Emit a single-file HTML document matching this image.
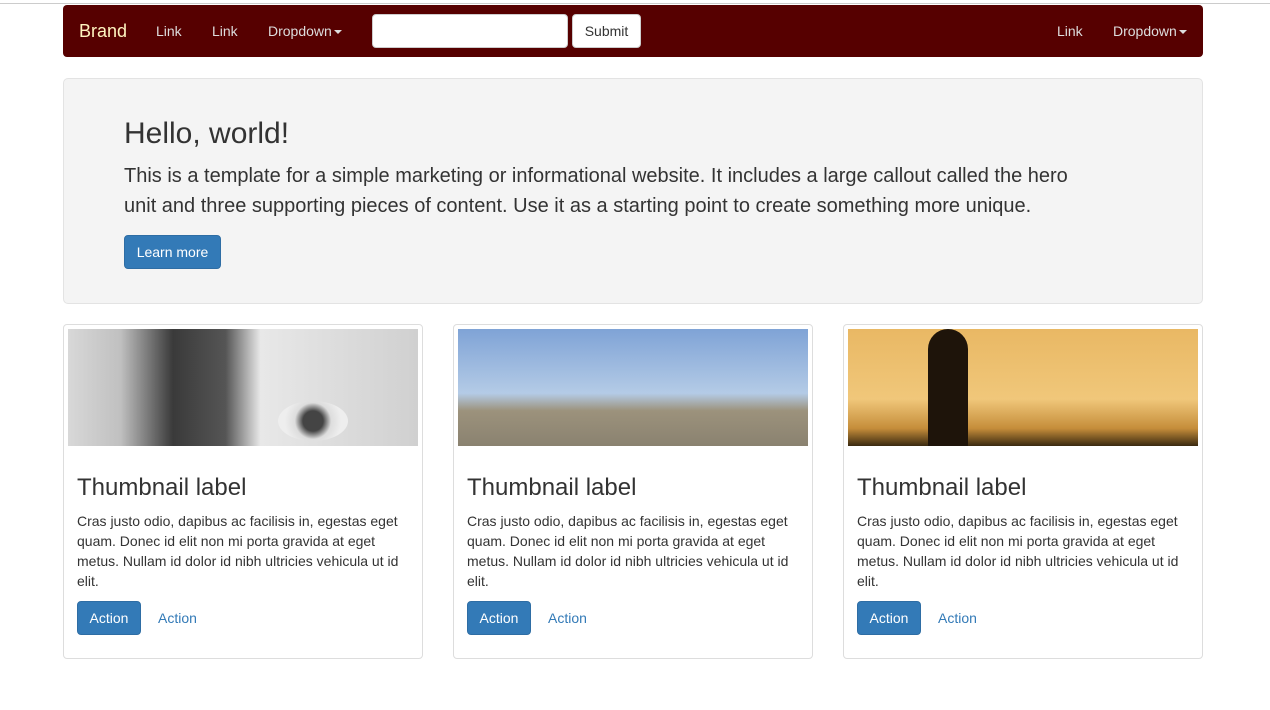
<!DOCTYPE html>
<html><head><style>
*{box-sizing:border-box;margin:0;padding:0}
body{width:1270px;height:710px;background:#fff;font-family:"Liberation Sans",Arial,sans-serif;color:#333;position:relative;overflow:hidden}
.abs{position:absolute}
.nav{left:63px;top:5px;width:1140px;height:52px;background:#560000;border-radius:4px}
.nav span{position:absolute;color:#ddd;font-size:14px;top:18px}
.caret{display:inline-block;border-top:4px solid #ddd;border-left:4px solid transparent;border-right:4px solid transparent;vertical-align:middle;margin-left:2px}
.jumbo{left:63px;top:78px;width:1140px;height:226px;background:#f4f4f4;border:1px solid #e3e3e3;border-radius:5px}
.btn{position:absolute;background:#337ab7;border:1px solid #2e6da4;color:#fff;border-radius:4px;font-size:14px;text-align:center}
.th{width:360px;height:335px;top:324px;border:1px solid #ddd;border-radius:4px;background:#fff}
.th .img{position:absolute;left:4px;top:4px;width:350px;height:117px}
.th h3{position:absolute;left:13px;top:149px;font-size:24px;font-weight:400}
.th p{position:absolute;left:13px;top:186px;width:335px;font-size:14px;line-height:20px}
.th a{position:absolute;left:94px;top:285px;color:#337ab7;font-size:14px}
</style></head><body>
<div class="abs" style="left:0;top:3px;width:1270px;height:1px;background:#ccc"></div>
<div class="abs nav">
<span style="left:16px;top:16px;font-size:18px;color:#fff4c0">Brand</span>
<span style="left:93px">Link</span>
<span style="left:149px">Link</span>
<span style="left:205px">Dropdown<i class="caret"></i></span>
<div class="abs" style="left:309px;top:9px;width:196px;height:34px;background:#fff;border:1px solid #ccc;border-radius:4px"></div>
<div class="abs" style="left:509px;top:9px;width:69px;height:34px;background:#fff;border:1px solid #ccc;border-radius:4px;font-size:14px;color:#333;text-align:center;line-height:32px">Submit</div>
<span style="left:994px">Link</span>
<span style="left:1050px">Dropdown<i class="caret"></i></span>
</div>
<div class="abs jumbo">
<div class="abs" style="left:60px;top:38px;font-size:30px">Hello, world!</div>
<div class="abs" style="left:60px;top:82px;width:970px;font-size:20px;line-height:30px">This is a template for a simple marketing or informational website. It includes a large callout called the hero unit and three supporting pieces of content. Use it as a starting point to create something more unique.</div>
<div class="btn" style="left:60px;top:156px;width:97px;height:34px;line-height:32px">Learn more</div>
</div>
<div class="abs th" style="left:63px"><div class="img" style="background:linear-gradient(90deg,#d8d8d8 0%,#c0c0c0 15%,#3a3a3a 30%,#555 45%,#e8e8e8 55%,#d0d0d0 100%)"><div class="abs" style="left:210px;top:72px;width:70px;height:40px;border-radius:50%;background:radial-gradient(circle,#444 25%,#ddd 45%,#eee 70%)"></div></div>
<h3>Thumbnail label</h3><p>Cras justo odio, dapibus ac facilisis in, egestas eget quam. Donec id elit non mi porta gravida at eget metus. Nullam id dolor id nibh ultricies vehicula ut id elit.</p>
<div class="btn" style="left:13px;top:276px;width:64px;height:34px;line-height:32px">Action</div><a>Action</a></div>
<div class="abs th" style="left:453px"><div class="img" style="background:linear-gradient(180deg,#7fa3d6 0%,#b4cbe6 55%,#9c927c 70%,#8a8270 100%)"></div>
<h3>Thumbnail label</h3><p>Cras justo odio, dapibus ac facilisis in, egestas eget quam. Donec id elit non mi porta gravida at eget metus. Nullam id dolor id nibh ultricies vehicula ut id elit.</p>
<div class="btn" style="left:13px;top:276px;width:64px;height:34px;line-height:32px">Action</div><a>Action</a></div>
<div class="abs th" style="left:843px"><div class="img" style="background:linear-gradient(180deg,#e9b864 0%,#f0c77a 60%,#c58d3a 85%,#3a2a10 100%)"><div class="abs" style="left:80px;top:0;width:40px;height:117px;background:#1e140a;border-radius:20px 20px 0 0"></div></div>
<h3>Thumbnail label</h3><p>Cras justo odio, dapibus ac facilisis in, egestas eget quam. Donec id elit non mi porta gravida at eget metus. Nullam id dolor id nibh ultricies vehicula ut id elit.</p>
<div class="btn" style="left:13px;top:276px;width:64px;height:34px;line-height:32px">Action</div><a>Action</a></div>
</body></html>
